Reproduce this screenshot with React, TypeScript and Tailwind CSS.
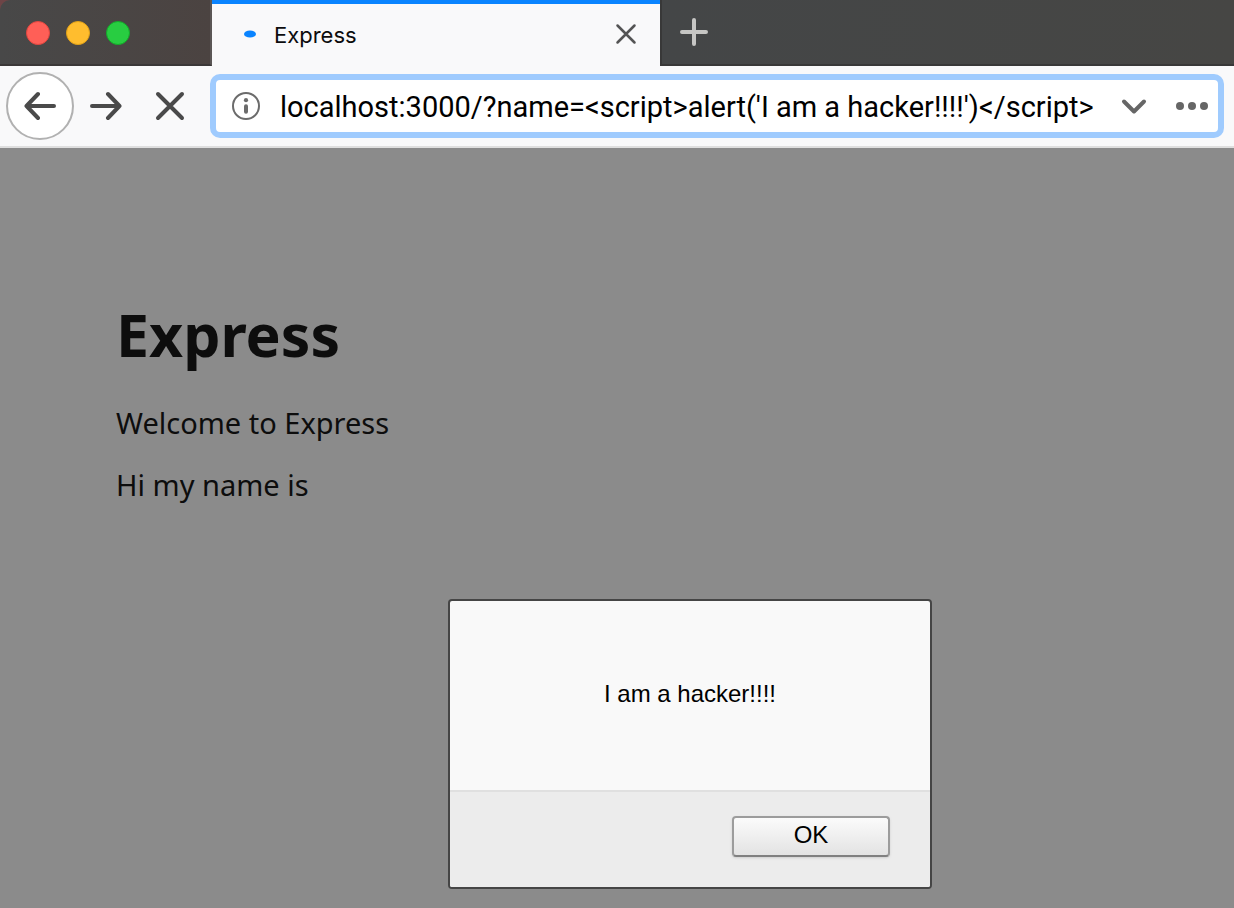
import { useState } from "react";

function TabStrip() {
  return (
    <header className="flex h-[66px] bg-[#6e4446]">
      <div className="flex w-[212px] shrink-0 items-center gap-4 rounded-tl-[10px] border-r-2 border-b-2 border-r-[#5b5655] border-b-[#3b3838] bg-linear-to-r from-[#484848] to-[#4b4341] pt-[2px] pl-[26px]">
        <button aria-label="Close window" className="size-6 rounded-full border border-[#e2463f] bg-[#ff5f57]" />
        <button aria-label="Minimize window" className="size-6 rounded-full border border-[#e1a116] bg-[#ffbd2e]" />
        <button aria-label="Zoom window" className="size-6 rounded-full border border-[#12ac28] bg-[#28cd41]" />
      </div>
      <div className="flex w-[448px] items-center border-t-4 border-[#0a84ff] bg-[#f9f9fa] pr-[22px] pb-[2px] pl-8">
        <svg className="h-2 w-3" viewBox="0 0 12 8" aria-hidden="true">
          <ellipse cx="6" cy="4" rx="6" ry="3.6" fill="#0a84ff" />
        </svg>
        <span className="ml-[18px] flex-1 pt-[2px] text-[22px] leading-7 text-[#0c0c0d]">Express</span>
        <button aria-label="Close tab">
          <svg className="size-6" viewBox="0 0 24 24" fill="none" stroke="#545454" strokeWidth="2.5" strokeLinecap="round">
            <path d="M3.5 3.5l17 17M20.5 3.5l-17 17" />
          </svg>
        </button>
      </div>
      <div className="flex flex-1 items-center border-b-2 border-l-2 border-[#383838] bg-linear-to-r from-[#444647] to-[#464644] pl-[18px]">
        <button aria-label="New tab">
          <svg className="size-7" viewBox="0 0 28 28" fill="none" stroke="#c6c6c4" strokeWidth="4" strokeLinecap="round">
            <path d="M14 2v24M2 14h24" />
          </svg>
        </button>
      </div>
    </header>
  );
}

function Toolbar() {
  const [url, setUrl] = useState("localhost:3000/?name=<script>alert('I am a hacker!!!!')</script>");
  return (
    <nav className="flex h-[82px] items-center border-b-2 border-[#dfdfdf] bg-[#f9f9fa] pr-[10px] pl-[6px]">
      <button
        aria-label="Back"
        className="flex size-[68px] shrink-0 items-center justify-center rounded-full border-2 border-[#b1b1b1] bg-white"
      >
        <svg className="size-8" viewBox="0 0 32 32" fill="none" stroke="#4a4a4a" strokeWidth="4" strokeLinecap="round" strokeLinejoin="round">
          <path d="M30 16H2.5M14 4L2.5 16L14 28" />
        </svg>
      </button>
      <button aria-label="Forward" className="ml-4 shrink-0">
        <svg className="size-8" viewBox="0 0 32 32" fill="none" stroke="#4a4a4a" strokeWidth="4" strokeLinecap="round" strokeLinejoin="round">
          <path d="M2 16H29.5M18 4L29.5 16L18 28" />
        </svg>
      </button>
      <button aria-label="Stop" className="ml-8 shrink-0">
        <svg className="size-8" viewBox="0 0 32 32" fill="none" stroke="#4a4a4a" strokeWidth="4" strokeLinecap="round">
          <path d="M4 4l24 24M28 4L4 28" />
        </svg>
      </button>
      <div className="ml-6 flex h-16 min-w-0 flex-1 items-center rounded-[10px] border-[6px] border-[#9fcbfe] bg-white pr-[10px] pl-4">
        <button aria-label="Site information" className="shrink-0">
          <svg className="size-7" viewBox="0 0 28 28" fill="none">
            <circle cx="14" cy="14" r="13" stroke="#6b6b6b" strokeWidth="2" />
            <circle cx="14" cy="8.2" r="2.1" fill="#6b6b6b" />
            <path d="M14 14.2v5.6" stroke="#6b6b6b" strokeWidth="4" strokeLinecap="round" />
          </svg>
        </button>
        <input
          aria-label="Address"
          value={url}
          onChange={(e) => setUrl(e.target.value)}
          spellCheck={false}
          className="ml-5 min-w-0 flex-1 bg-transparent pt-[2px] font-[Roboto,sans-serif] text-[29px] leading-9 text-black outline-none"
        />
        <button aria-label="Show history" className="ml-2 shrink-0">
          <svg className="size-7" viewBox="0 0 28 28" fill="none" stroke="#666666" strokeWidth="4" strokeLinecap="round" strokeLinejoin="round">
            <path d="M4 9.5l10 10l10-10" />
          </svg>
        </button>
        <button aria-label="Page actions" className="ml-7 shrink-0">
          <svg className="h-8 w-8" viewBox="0 0 32 32" fill="#666666">
            <circle cx="4" cy="16" r="4" />
            <circle cx="16" cy="16" r="4" />
            <circle cx="28" cy="16" r="4" />
          </svg>
        </button>
      </div>
    </nav>
  );
}

function AlertDialog() {
  return (
    <div
      role="alertdialog"
      aria-labelledby="alert-message"
      className="absolute top-[451px] left-[448px] flex h-[290px] w-[484px] flex-col overflow-hidden rounded border-2 border-[#454545] bg-[#f9f9f9] font-['Liberation_Sans',Arial,sans-serif] text-black"
    >
      <p id="alert-message" className="flex flex-1 items-center justify-center pb-1 text-2xl">
        I am a hacker!!!!
      </p>
      <div className="flex h-[97px] justify-end border-t-2 border-[#e0e0e0] bg-[#ececec] pt-6 pr-10">
        <button className="h-[41px] w-[158px] rounded border-2 border-[#9c9c9c] border-b-[#808080] bg-linear-to-b from-[#fbfbfb] to-[#e3e3e3] pb-1 text-2xl leading-8 shadow-sm">
          OK
        </button>
      </div>
    </div>
  );
}

export default function App() {
  return (
    <div className="flex min-h-screen flex-col bg-[#8b8b8b] font-[Inter,sans-serif]">
      <TabStrip />
      <Toolbar />
      <main className="relative flex-1 px-[116px] pt-[146px] font-['Noto_Sans',sans-serif] text-[#0d0d0d]">
        <h1 className="text-[59px] leading-[80px] font-bold">Express</h1>
        <p className="mt-8 text-[29px] leading-[34px]">Welcome to Express</p>
        <p className="mt-7 text-[29px] leading-[34px]">Hi my name is</p>
        <AlertDialog />
      </main>
    </div>
  );
}
